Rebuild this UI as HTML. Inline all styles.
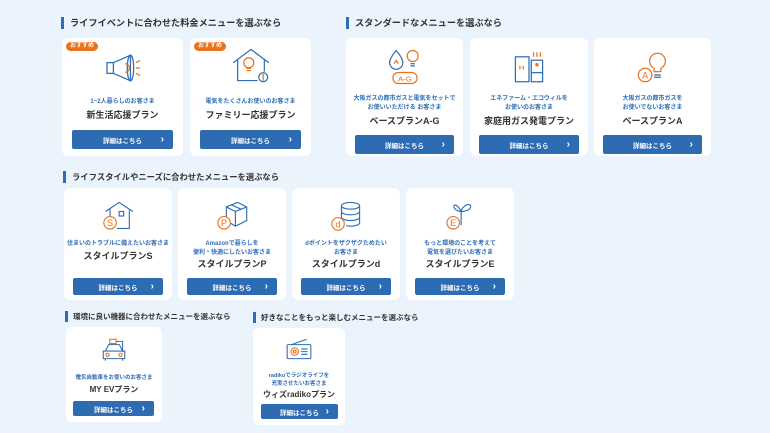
<!DOCTYPE html>
<html><head><meta charset="utf-8"><style>
*{margin:0;padding:0;box-sizing:border-box}
body{width:770px;height:433px;background:#ebf3fd;font-family:"Liberation Sans","Noto Sans CJK JP",sans-serif;position:relative;overflow:hidden;color:#333}
.h{position:absolute;font-size:9.2px;font-weight:bold;color:#333;border-left:3px solid #2f6db5;padding-left:6px;line-height:12px;white-space:nowrap}
.h.m{font-size:8.3px}
.h.s{font-size:7.5px;line-height:11px;padding-left:5px}
.c{position:absolute;background:#fff;border-radius:6px;text-align:center}
.c svg{position:absolute;left:50%;transform:translateX(-50%)}
.d{position:absolute;left:0;right:0;font-size:6px;color:#2f6db5;font-weight:bold;line-height:9px}
.t{position:absolute;left:0;right:0;font-size:9px;font-weight:bold;color:#333;line-height:11px}
.b{position:absolute;background:#2d6bb3;border-radius:2px;color:#fff;font-size:6.5px;font-weight:bold;display:flex;align-items:center;justify-content:center}
.b:after{content:"›";position:absolute;right:9px;font-size:10px;top:50%;transform:translateY(-55%)}
.bd{position:absolute;left:4px;top:4px;background:#e8731f;color:#fff;font-size:6px;font-weight:bold;border-radius:5px;padding:0 4px;line-height:9px}
</style></head><body>

<div class="h" style="left:61px;top:17px">ライフイベントに合わせた料金メニューを選ぶなら</div>
<div class="h" style="left:346px;top:17px">スタンダードなメニューを選ぶなら</div>

<div class="c" style="left:62px;top:38px;width:121px;height:118px">
<div class="bd">おすすめ</div>
<svg width="42" height="32" viewBox="2 0 38 30" style="top:14px" fill="none" stroke-width="1.2"><path d="M6 10 L12 10 L28 3 L28 27 L12 20 L6 20 Z" stroke="#2f6db5"/><ellipse cx="28" cy="15" rx="3" ry="12" stroke="#2f6db5"/><path d="M12 10 V20" stroke="#2f6db5"/><path d="M23 11 a4 4 0 0 1 0 8" stroke="#e8731f"/><path d="M33 10 l4 -2 M33 15 h4 M33 20 l4 2" stroke="#e8731f"/></svg>
<div class="d" style="top:60px">1~2人暮らしのお客さま</div>
<div class="t" style="top:72px">新生活応援プラン</div>
<div class="b" style="left:10px;top:92px;width:101px;height:19px">詳細はこちら</div>
</div>

<div class="c" style="left:190px;top:38px;width:121px;height:118px">
<div class="bd">おすすめ</div>
<svg width="40" height="36" viewBox="0 0 36 32" style="top:9px" fill="none" stroke-width="1.1"><path d="M2 14 L18 2 L34 14 M6 11 V30 H24 M30 11 V22" stroke="#2f6db5"/><circle cx="16" cy="14" r="4.5" stroke="#e8731f"/><path d="M14 19 h4 M14 21 h4" stroke="#e8731f"/><circle cx="29" cy="27" r="4" stroke="#2f6db5"/><path d="M29 24 v6" stroke="#e8731f"/></svg>
<div class="d" style="top:60px">電気をたくさんお使いのお客さま</div>
<div class="t" style="top:72px">ファミリー応援プラン</div>
<div class="b" style="left:10px;top:92px;width:101px;height:19px">詳細はこちら</div>
</div>

<div class="c" style="left:346px;top:38px;width:117px;height:118px">
<svg width="33" height="40" viewBox="0 0 30 36" style="top:9px" fill="none" stroke-width="1.1"><path d="M7 3 C3 8 1 11 1 14 a6 6 0 0 0 12 0 c0 -3 -2 -6 -6 -11z" stroke="#2f6db5"/><path d="M5 15 l2 -3 2 3" stroke="#e8731f"/><circle cx="22" cy="8" r="5" stroke="#e8731f"/><path d="M20 15 h4 M20 17 h4" stroke="#2f6db5"/><rect x="4" y="23" width="22" height="10" rx="5" stroke="#e8731f"/><text x="15" y="31" font-size="7" fill="#e8731f" stroke="none" text-anchor="middle" font-family="Liberation Sans">A-G</text></svg>
<div class="d" style="top:57px">大阪ガスの都市ガスと電気をセットで<br>お使いいただける お客さま</div>
<div class="t" style="top:78px">ベースプランA-G</div>
<div class="b" style="left:9px;top:97px;width:99px;height:19px">詳細はこちら</div>
</div>

<div class="c" style="left:470px;top:38px;width:118px;height:118px">
<svg width="34" height="34" viewBox="0 0 30 30" style="top:12px" fill="none" stroke-width="1.1"><rect x="3" y="6" width="12" height="22" stroke="#2f6db5"/><path d="M7 14 v3 M10 14 v3" stroke="#e8731f"/><rect x="17" y="9" width="10" height="19" stroke="#2f6db5"/><path d="M17 20 h10" stroke="#2f6db5"/><circle cx="22" cy="13" r="1.5" fill="#e8731f" stroke="none"/><path d="M19 2 v4 M22 2 v4 M25 2 v4" stroke="#e8731f"/></svg>
<div class="d" style="top:57px">エネファーム・エコウィルを<br>お使いのお客さま</div>
<div class="t" style="top:78px">家庭用ガス発電プラン</div>
<div class="b" style="left:9px;top:97px;width:100px;height:19px">詳細はこちら</div>
</div>

<div class="c" style="left:594px;top:38px;width:117px;height:118px">
<svg width="34" height="36" viewBox="0 0 30 32" style="top:10px" fill="none" stroke-width="1.1"><path d="M16 18 a7 7 0 1 1 6 0 v3 h-6 z" stroke="#e8731f"/><path d="M16 24 h6 M16 26 h6" stroke="#2f6db5"/><circle cx="8" cy="24" r="6" stroke="#e8731f"/><text x="8" y="27" font-size="8" fill="#e8731f" stroke="none" text-anchor="middle" font-family="Liberation Sans">A</text></svg>
<div class="d" style="top:57px">大阪ガスの都市ガスを<br>お使いでないお客さま</div>
<div class="t" style="top:78px">ベースプランA</div>
<div class="b" style="left:9px;top:97px;width:99px;height:19px">詳細はこちら</div>
</div>

<div class="h m" style="left:63px;top:171px">ライフスタイルやニーズに合わせたメニューを選ぶなら</div>

<div class="c" style="left:64px;top:188px;width:108px;height:112px">
<svg width="34" height="32" viewBox="0 0 30 28" style="top:12px" fill="none" stroke-width="1"><path d="M4 10 L16 2 L28 10 M8 8 V14 M25 9 V25 H14" stroke="#2f6db5"/><rect x="16" y="10" width="4" height="4" stroke="#2f6db5"/><circle cx="8" cy="20" r="5.5" stroke="#e8731f"/><text x="8" y="23" font-size="8" fill="#e8731f" stroke="none" text-anchor="middle" font-family="Liberation Sans">S</text></svg>
<div class="d" style="top:52px">住まいのトラブルに備えたいお客さま</div>
<div class="t" style="top:63px">スタイルプランS</div>
<div class="b" style="left:9px;top:90px;width:90px;height:17px">詳細はこちら</div>
</div>

<div class="c" style="left:178px;top:188px;width:108px;height:112px">
<svg width="34" height="32" viewBox="0 0 30 28" style="top:12px" fill="none" stroke-width="1"><path d="M10 6 L20 2 L28 6 L28 18 L18 23 L10 18 Z M10 6 L18 10 L28 6 M18 10 V23 M14 4 L23 8" stroke="#2f6db5"/><circle cx="8" cy="20" r="5.5" stroke="#e8731f" fill="#fff"/><text x="8" y="23" font-size="8" fill="#e8731f" stroke="none" text-anchor="middle" font-family="Liberation Sans">P</text></svg>
<div class="d" style="top:52px">Amazonで暮らしを<br>便利・快適にしたいお客さま</div>
<div class="t" style="top:71px">スタイルプランP</div>
<div class="b" style="left:9px;top:90px;width:90px;height:17px">詳細はこちら</div>
</div>

<div class="c" style="left:292px;top:188px;width:108px;height:112px">
<svg width="34" height="32" viewBox="0 0 30 28" style="top:12px" fill="none" stroke-width="1"><ellipse cx="19" cy="5" rx="8" ry="3" stroke="#2f6db5"/><path d="M11 5 v15 M27 5 v15 a8 3 0 0 1 -12 2.5 M11 10 a8 3 0 0 0 16 0 M11 15 a8 3 0 0 0 16 0" stroke="#2f6db5"/><circle cx="8" cy="21" r="5.5" stroke="#e8731f" fill="#fff"/><text x="8" y="24" font-size="8" fill="#e8731f" stroke="none" text-anchor="middle" font-family="Liberation Sans">d</text></svg>
<div class="d" style="top:52px">dポイントをザクザクためたい<br>お客さま</div>
<div class="t" style="top:71px">スタイルプランd</div>
<div class="b" style="left:9px;top:90px;width:90px;height:17px">詳細はこちら</div>
</div>

<div class="c" style="left:406px;top:188px;width:108px;height:112px">
<svg width="34" height="32" viewBox="0 0 30 28" style="top:12px" fill="none" stroke-width="1"><path d="M16 22 V8 M16 10 C12 2 8 4 10 7 C12 10 16 10 16 10 M16 9 C20 2 26 3 24 7 C22 10 16 10 16 10" stroke="#2f6db5"/><circle cx="9" cy="20" r="5.5" stroke="#e8731f" fill="#fff"/><text x="9" y="23" font-size="8" fill="#e8731f" stroke="none" text-anchor="middle" font-family="Liberation Sans">E</text></svg>
<div class="d" style="top:52px">もっと環境のことを考えて<br>電気を選びたいお客さま</div>
<div class="t" style="top:71px">スタイルプランE</div>
<div class="b" style="left:9px;top:90px;width:90px;height:17px">詳細はこちら</div>
</div>

<div class="h s" style="left:65px;top:311px">環境に良い機器に合わせたメニューを選ぶなら</div>
<div class="h s" style="left:253px;top:312px">好きなことをもっと楽しむメニューを選ぶなら</div>

<div class="c" style="left:66px;top:327px;width:96px;height:95px">
<svg width="28" height="26" viewBox="0 0 26 24" style="top:10px" fill="none" stroke-width="1"><rect x="9" y="2" width="6" height="4" stroke="#e8731f"/><path d="M15 4 h6 v10" stroke="#2f6db5"/><path d="M5 13 L8 7 H18 L21 13 Z M3 13 H23 V20 H3 Z M5 20 v2 M21 20 v2" stroke="#2f6db5"/><circle cx="7" cy="16.5" r="1.5" stroke="#e8731f"/><circle cx="19" cy="16.5" r="1.5" stroke="#e8731f"/></svg>
<div class="d" style="top:47px;font-size:5.5px">電気自動車をお使いのお客さま</div>
<div class="t" style="top:57px;font-size:8px">MY EVプラン</div>
<div class="b" style="left:7px;top:74px;width:81px;height:15px">詳細はこちら</div>
</div>

<div class="c" style="left:253px;top:328px;width:92px;height:97px">
<svg width="28" height="24" viewBox="0 0 26 22" style="top:10px" fill="none" stroke-width="1"><path d="M6 6 L20 1" stroke="#2f6db5"/><rect x="2" y="6" width="22" height="13" rx="1" stroke="#2f6db5"/><circle cx="9" cy="12.5" r="3.5" stroke="#e8731f"/><circle cx="9" cy="12.5" r="1.3" stroke="#e8731f"/><path d="M15 10 h6 M15 12.5 h6 M15 15 h6" stroke="#2f6db5"/></svg>
<div class="d" style="top:44px;font-size:5.5px;line-height:8px">radikoでラジオライフを<br>充実させたいお客さま</div>
<div class="t" style="top:61px;font-size:8px">ウィズradikoプラン</div>
<div class="b" style="left:8px;top:76px;width:77px;height:15px">詳細はこちら</div>
</div>

</body></html>
